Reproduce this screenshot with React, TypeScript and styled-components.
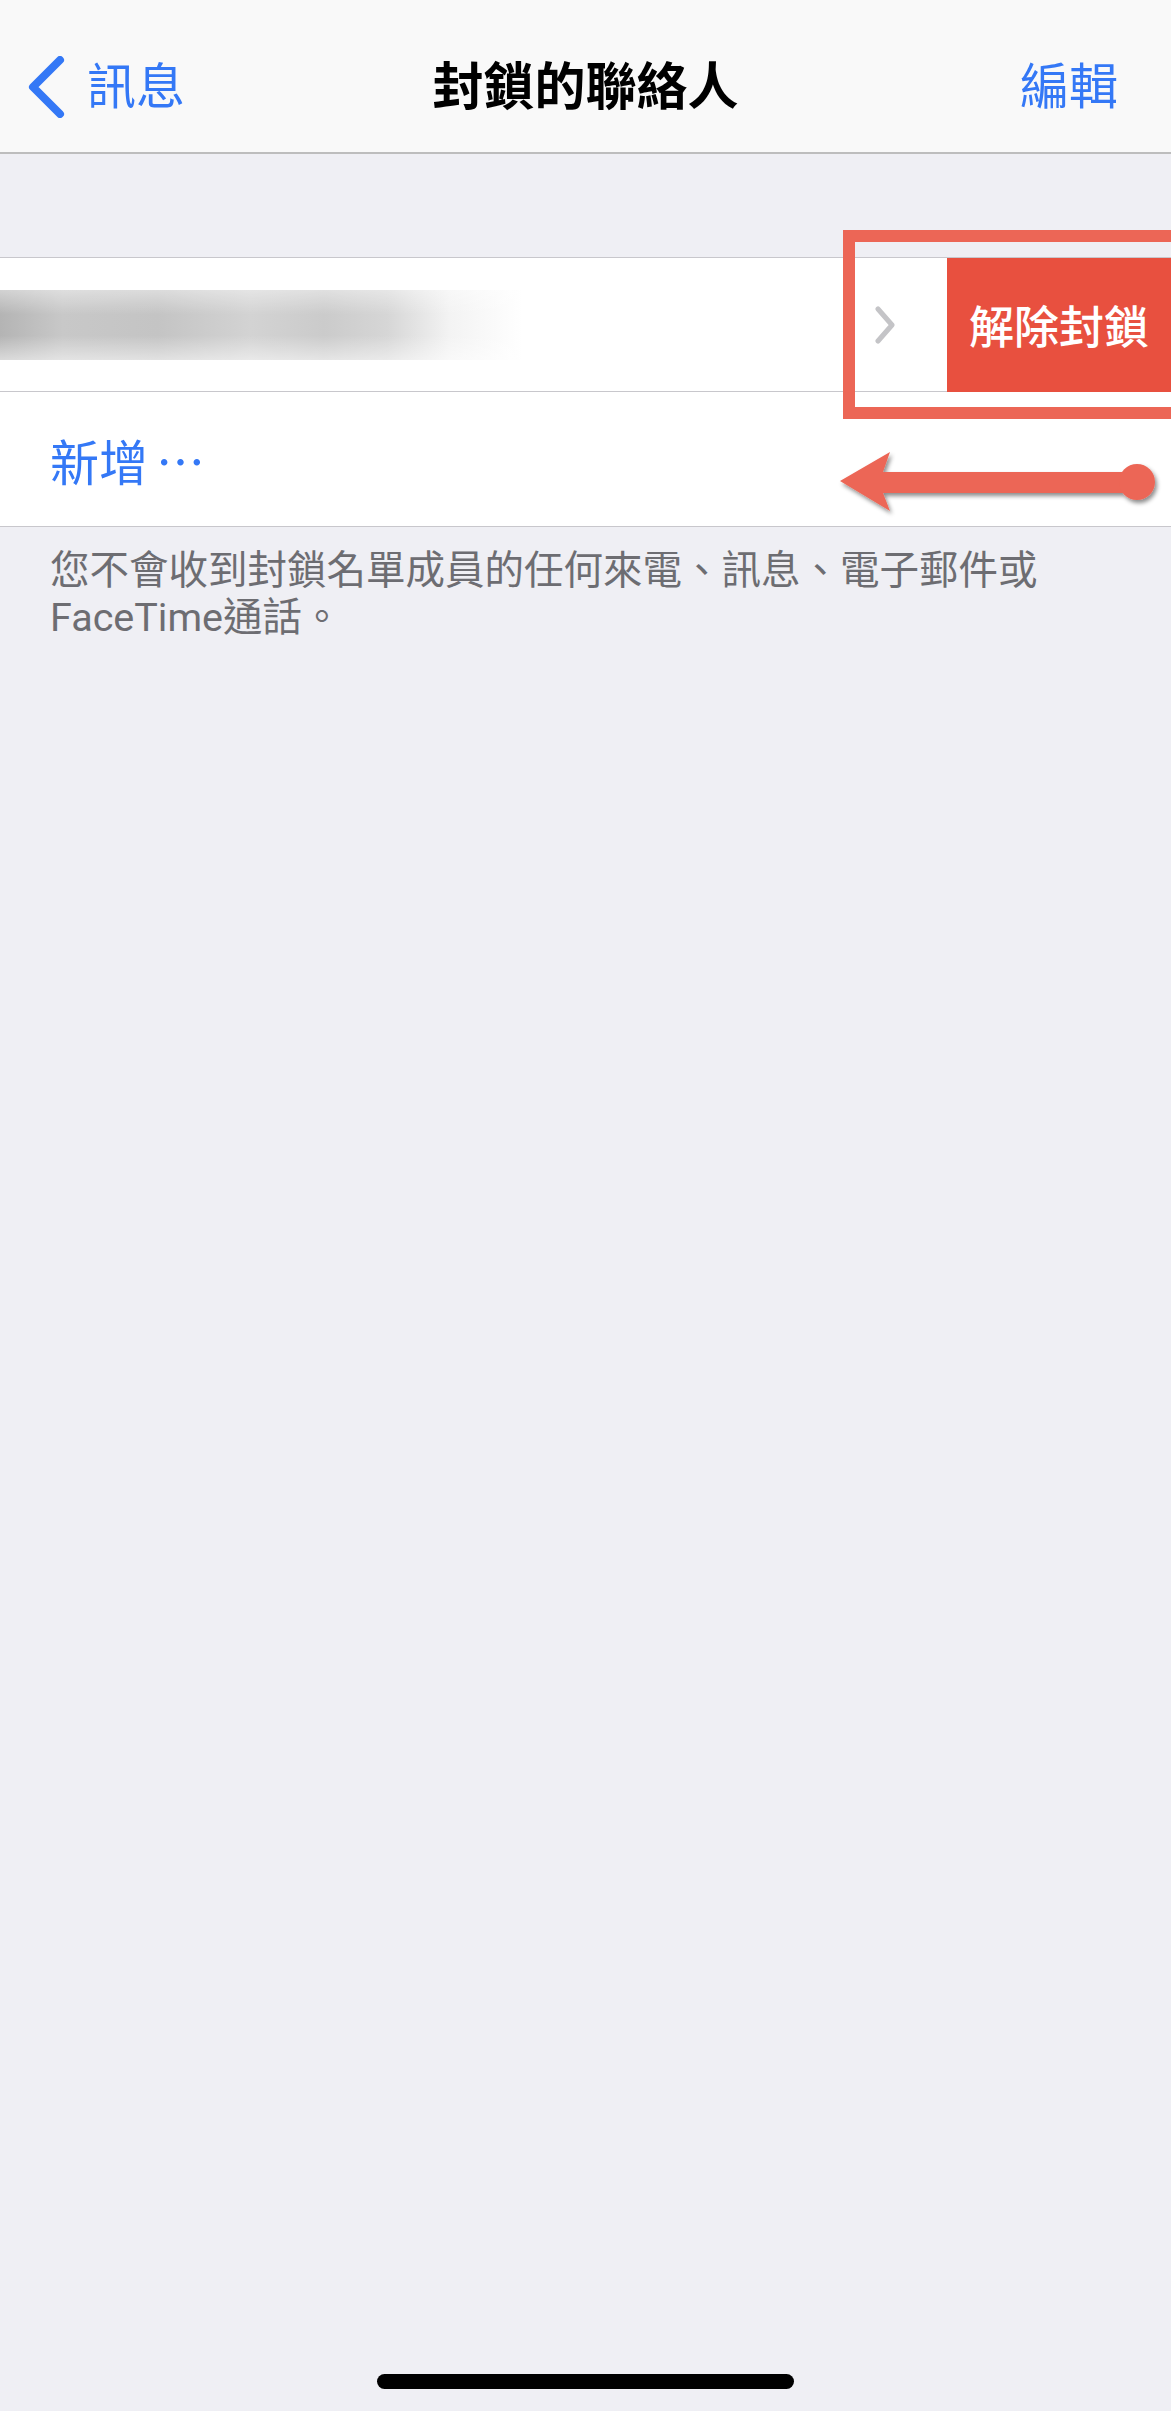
import styled, { createGlobalStyle } from "styled-components";

const GlobalStyle = createGlobalStyle`
  html, body {
    margin: 0;
    padding: 0;
    background: #efeff4;
  }
  body {
    font-family: Roboto, "Noto Sans CJK TC", "Noto Sans", sans-serif;
    -webkit-font-smoothing: antialiased;
  }
`;

const BLUE = "#3478f6";
const MARK = "#ec6656";

function BackChevron() {
  return (
    <svg width="40" height="62" viewBox="0 0 40 62" fill="none">
      <path
        d="M33 4 L6 31 L33 58"
        stroke={BLUE}
        strokeWidth="8"
        strokeLinecap="round"
        strokeLinejoin="round"
      />
    </svg>
  );
}

function RowChevron() {
  return (
    <svg width="22" height="38" viewBox="0 0 22 38" fill="none">
      <path
        d="M4 3 L18 19 L4 35"
        stroke="#c4c4c7"
        strokeWidth="5"
        strokeLinecap="round"
        strokeLinejoin="round"
      />
    </svg>
  );
}

function SwipeArrow() {
  return (
    <ArrowSvg width="340" height="90" viewBox="0 0 340 90">
      <defs>
        <filter id="arrowShadow" x="-10%" y="-30%" width="120%" height="160%">
          <feDropShadow dx="2" dy="3" stdDeviation="2" floodColor="#000" floodOpacity="0.45" />
        </filter>
      </defs>
      <g filter="url(#arrowShadow)" fill={MARK}>
        <polygon points="10,41 60,12 53,32 305,32 305,53 53,53 60,71" />
        <circle cx="307" cy="42" r="18" />
      </g>
    </ArrowSvg>
  );
}

export default function App() {
  return (
    <>
      <GlobalStyle />
      <Page>
        <NavBar>
          <BackButton>
            <BackChevron />
            <NavLink>訊息</NavLink>
          </BackButton>
          <NavTitle>封鎖的聯絡人</NavTitle>
          <EditButton>編輯</EditButton>
        </NavBar>

        <ListGroup>
          <ContactRow>
            <BlurredName />
            <RowChevron />
            <UnblockButton>解除封鎖</UnblockButton>
          </ContactRow>
          <AddRow>
            <AddLabel>
              新增<Ellipsis>⋯</Ellipsis>
            </AddLabel>
          </AddRow>
        </ListGroup>

        <FooterNote>
          您不會收到封鎖名單成員的任何來電、訊息、電子郵件或
          <br />
          FaceTime通話。
        </FooterNote>

        <Filler />
        <HomeIndicator />

        <HighlightBox />
        <SwipeArrow />
      </Page>
    </>
  );
}

const Page = styled.div`
  position: relative;
  width: 1171px;
  min-height: 2411px;
  overflow: hidden;
  display: flex;
  flex-direction: column;
  background: #efeff4;
`;

const NavBar = styled.header`
  height: 130px;
  padding: 22px 27px 0 27px;
  display: grid;
  grid-template-columns: 1fr auto 1fr;
  align-items: center;
  background: #f9f9f9;
  border-bottom: 2px solid #bdbdbd;
`;

const BackButton = styled.div`
  display: flex;
  align-items: center;
  gap: 20px;
`;

const NavLink = styled.span`
  font-size: 49px;
  line-height: 1;
  color: ${BLUE};
`;

const NavTitle = styled.h1`
  margin: 0;
  font-size: 51px;
  line-height: 1;
  font-weight: 700;
  color: #000;
`;

const EditButton = styled(NavLink)`
  justify-self: end;
  margin-right: 26px;
`;

const ListGroup = styled.section`
  margin-top: 103px;
  background: #fff;
  border-top: 1px solid #c8c7cc;
  border-bottom: 1px solid #c8c7cc;
`;

const ContactRow = styled.div`
  height: 133px;
  display: flex;
  align-items: center;
  border-bottom: 1px solid #c8c7cc;
`;

const BlurredName = styled.div`
  width: 523px;
  height: 70px;
  margin-right: auto;
  background:
    linear-gradient(180deg, rgba(255,255,255,0.4) 0%, rgba(255,255,255,0) 35%, rgba(255,255,255,0) 65%, rgba(255,255,255,0.5) 100%),
    linear-gradient(90deg, #b4b4b4 0%, #c8c8c8 12%, #c4c4c4 30%, #d3d3d3 48%, #cbcbcb 62%, #d6d6d6 74%, #f3f3f3 86%, #ffffff 100%);
`;

const UnblockButton = styled.div`
  width: 224px;
  height: 134px;
  margin: -1px 0 -1px 51px;
  display: flex;
  align-items: center;
  justify-content: center;
  background: #e8503f;
  color: #fff;
  font-size: 45px;
  font-weight: 500;
`;

const AddRow = styled.div`
  height: 134px;
  display: flex;
  align-items: center;
  padding-left: 50px;
`;

const AddLabel = styled.span`
  font-size: 49px;
  color: ${BLUE};
  font-family: "Noto Sans CJK TC", sans-serif;
`;

const Ellipsis = styled.span`
  margin-left: 8px;
`;

const FooterNote = styled.p`
  margin: 20px 0 0;
  padding: 0 50px;
  font-size: 39.5px;
  line-height: 47px;
  color: #6d6d72;
`;

const Filler = styled.div`
  flex: 1;
`;

const HomeIndicator = styled.div`
  align-self: center;
  width: 417px;
  height: 15px;
  margin-bottom: 22px;
  border-radius: 8px;
  background: #000;
`;

const HighlightBox = styled.div`
  position: absolute;
  top: 230px;
  left: 843px;
  width: 400px;
  height: 189px;
  box-sizing: border-box;
  border: 12px solid ${MARK};
`;

const ArrowSvg = styled.svg`
  position: absolute;
  top: 440px;
  left: 830px;
`;
